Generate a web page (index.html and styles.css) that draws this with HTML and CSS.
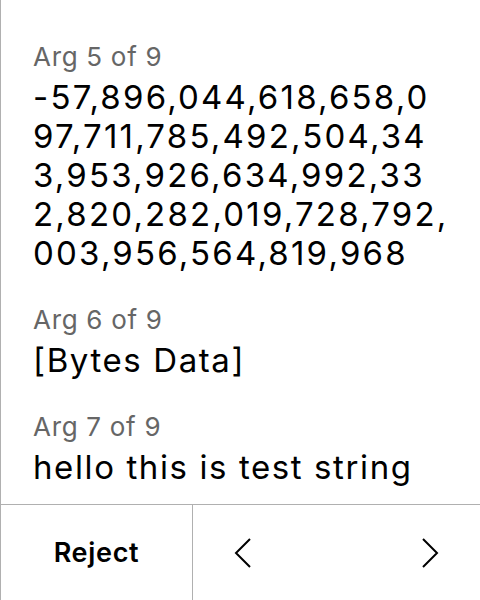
FILE: index.html
```html
<!DOCTYPE html>
<html>
<head>
<meta charset="utf-8">
<link rel="stylesheet" href="styles.css">
</head>
<body>
<div class="screen">
  <div class="content">
    <div class="arg">
      <div class="label">Arg 5 of 9</div>
      <div class="value num">-57,896,044,618,658,097,711,785,492,504,343,953,926,634,992,332,820,282,019,728,792,003,956,564,819,968</div>
    </div>
    <div class="arg">
      <div class="label">Arg 6 of 9</div>
      <div class="value">[Bytes Data]</div>
    </div>
    <div class="arg">
      <div class="label">Arg 7 of 9</div>
      <div class="value">hello this is test string</div>
    </div>
  </div>
  <div class="footer">
    <div class="reject">Reject</div>
    <div class="nav">
      <svg class="chev" width="20" height="32" viewBox="0 0 20 32"><path d="M17 2 L3 16 L17 30" fill="none" stroke="#000" stroke-width="2"/></svg>
      <svg class="chev" width="20" height="32" viewBox="0 0 20 32"><path d="M3 2 L17 16 L3 30" fill="none" stroke="#000" stroke-width="2"/></svg>
    </div>
  </div>
</div>
</body>
</html>
```
FILE: styles.css
```css
* { box-sizing: border-box; }
html, body { margin: 0; padding: 0; background: #fff; }
body {
  font-family: Inter, "Noto Sans", sans-serif;
  font-optical-sizing: none;
  font-variation-settings: "opsz" 14;
  color: #000;
}
.screen {
  width: 480px;
  height: 600px;
  border-left: 1px solid #b0b0b0;
  display: flex;
  flex-direction: column;
  overflow: hidden;
}
.content {
  flex: 1;
  min-height: 0;
  overflow: hidden;
  padding: 41px 29px 0 32px;
  display: flex;
  flex-direction: column;
  gap: 31px;
}
.arg {
  display: flex;
  flex-direction: column;
  gap: 5px;
}
.label {
  font-size: 26px;
  line-height: 32px;
  letter-spacing: 0.7px;
  color: #666;
}
.value {
  font-size: 33px;
  line-height: 39px;
  letter-spacing: 1.6px;
  word-break: break-all;
}
.num {
  letter-spacing: 2.2px;
}
.footer {
  flex-shrink: 0;
  height: 96px;
  border-top: 1px solid #b0b0b0;
  display: flex;
}
.reject {
  width: 192px;
  border-right: 1px solid #b0b0b0;
  display: flex;
  align-items: center;
  justify-content: center;
  font-size: 27px;
  font-weight: 600;
  letter-spacing: 0.7px;
}
.nav {
  flex: 1;
  display: flex;
  align-items: center;
  justify-content: space-between;
  padding: 0 40px 0 40px;
}
```
